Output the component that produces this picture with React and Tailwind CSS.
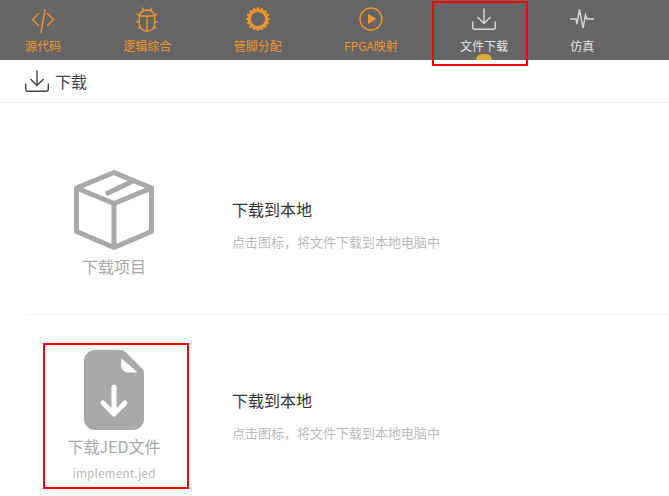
const CJK = { fontFamily: '"Noto Sans CJK SC", "Noto Sans", sans-serif' };

function CodeIcon() {
  return (
    <svg className="mt-[4px]" width="24" height="24" viewBox="0 0 24 24" fill="none" stroke="#f0932b" strokeWidth="1.4">
      <path d="M8 4 1.500 10.500 8 17M16 4l6.500 6.500L16 17M14.200 0.500 9.800 24" />
    </svg>
  );
}
function BugIcon() {
  return (
    <svg width="22" height="25" viewBox="0 0 22 25" fill="none" stroke="#f0932b" strokeWidth="1.4">
      <path d="M3.200 11c0-5.500 3.300-8 7.800-8s7.800 2.500 7.800 8v5.500c0 4.500-3.300 7.800-7.800 7.800s-7.800-3.300-7.800-7.800z" />
      <path d="M3.200 9h15.600M11 9v15M6 0.500l1.500 3M16 0.500l-1.500 3M0.700 6.500 3.500 9M21.300 6.500 18.500 9M0.300 14.700h3M21.700 14.700h-3M1.500 21.500 4.500 19M20.500 21.500 17.500 19" />
    </svg>
  );
}
function GearIcon() {
  const teeth = [0, 45, 90, 135, 180, 225, 270, 315, 22.5, 67.5, 112.5, 157.5, 202.5, 247.5, 292.5, 337.5];
  return (
    <svg width="24" height="24" viewBox="0 0 24 24" fill="none">
      <circle cx="12" cy="12" r="8.700" stroke="#f0932b" strokeWidth="3.200" />
      {teeth.map((a) => (
        <rect key={a} x="10.700" y="0.300" width="2.600" height="3" rx="0.800" fill="#f0932b" transform={`rotate(${a} 12 12)`} />
      ))}
    </svg>
  );
}
function PlayIcon() {
  return (
    <svg width="24" height="24" viewBox="0 0 24 24" fill="none">
      <circle cx="12" cy="12" r="11" stroke="#f0932b" strokeWidth="1.300" />
      <path d="M9.500 7.500v9l7-4.500z" fill="#f0932b" stroke="#f0932b" strokeWidth="1" strokeLinejoin="round" />
    </svg>
  );
}
function DownloadIcon({ color, w = 24, h = 22 }) {
  return (
    <svg width={w} height={h} viewBox="0 0 24 22" fill="none" stroke={color} strokeWidth="1.400">
      <path d="M12 0.500V15M5.500 9l6.500 6.500L18.500 9" />
      <path d="M0.700 13.500v5.500c0 1.300 1 2.300 2.300 2.300h18c1.300 0 2.300-1 2.300-2.300v-5.500" />
    </svg>
  );
}
function WaveIcon() {
  return (
    <svg width="24" height="22" viewBox="0 0 24 22" fill="none" stroke="#d4d4d4" strokeWidth="1.500">
      <path d="M0 11h6l1 5L9.500 1.500 13 20l2.500-13 1.500 4h7" />
    </svg>
  );
}
function BoxIcon() {
  return (
    <svg width="80" height="80" viewBox="0 0 80 80" fill="none" stroke="#a8a9ab" strokeWidth="5" strokeLinejoin="round">
      <path d="M40 2.500 77.500 18v43.500L40 77.500 2.500 61.500V18z" />
      <path d="M2.500 18 40 33.500 77.500 18M40 33.500v44M32 24 60 10.500" />
    </svg>
  );
}
function FileIcon() {
  return (
    <svg width="60" height="80" viewBox="0 0 60 80">
      <path d="M11 0h26.500a5 5 0 0 1 3.500 1.500L58.500 19a5 5 0 0 1 1.500 3.500V69a11 11 0 0 1-11 11H11A11 11 0 0 1 0 69V11A11 11 0 0 1 11 0z" fill="#a8a9ab" />
      <path d="M37.700 9V16a6 6 0 0 0 6 6H52.500Z" fill="#fff" stroke="#fff" strokeWidth="1" strokeLinejoin="round" />
      <path d="M30 37v27M19 53l11 11 11-11" fill="none" stroke="#fff" strokeWidth="5" strokeLinecap="round" strokeLinejoin="round" />
    </svg>
  );
}

function NavItem({ icon, label, active, white }) {
  return (
    <div className="relative flex h-[60px] flex-col items-center">
      <div className="flex h-[38px] items-center">{icon}</div>
      <span className={`whitespace-nowrap text-xs leading-[16px] ${white ? "text-[#e4e4e4]" : "text-[#f0932b]"}`}>{label}</span>
      {active && <span className="absolute bottom-0 left-1/2 h-[6px] w-[16px] -translate-x-1/2 rounded-t-full bg-[#dcaa32]" />}
    </div>
  );
}

function Row({ height, children, title, sub, textTop }) {
  return (
    <div className={`flex ${height}`}>
      {children}
      <div className={`ml-[31px] ${textTop}`}>
        <p className="text-base leading-[24px] text-[#333]">{title}</p>
        <p className="mt-[11px] text-[13px] leading-[20px] text-[#bbb]">{sub}</p>
      </div>
    </div>
  );
}

export default function App() {
  return (
    <div className="relative h-[496px] w-[669px] overflow-hidden bg-white" style={CJK}>
      <nav className="flex h-[60px] gap-[62.3px] bg-[#666] pl-[25px]">
        <NavItem icon={<CodeIcon />} label="源代码" />
        <NavItem icon={<BugIcon />} label="逻辑综合" />
        <NavItem icon={<GearIcon />} label="管脚分配" />
        <NavItem icon={<PlayIcon />} label="FPGA映射" />
        <NavItem icon={<DownloadIcon color="#d9d9d9" />} label="文件下载" active white />
        <NavItem icon={<WaveIcon />} label="仿真" white />
      </nav>

      <header className="flex h-[43px] items-center gap-[6px] border-b border-[#eee] pl-[25px]">
        <DownloadIcon color="#444" />
        <span className="text-base text-[#444]">下载</span>
      </header>

      <main className="pl-[27px]">
        <section className="border-b border-[#f2f2f2]">
          <Row height="h-[211px] pt-[67px]" title="下载到本地" sub="点击图标，将文件下载到本地电脑中" textTop="pt-[27px]">
            <div className="flex w-[174px] flex-col items-center">
              <BoxIcon />
              <span className="mt-[5px] text-base leading-[22px] text-[#a8a9ab]">下载项目</span>
            </div>
          </Row>
        </section>
        <section>
          <Row height="pt-[35px]" title="下载到本地" sub="点击图标，将文件下载到本地电脑中" textTop="pt-[38px]">
            <div className="flex w-[174px] flex-col items-center">
              <FileIcon />
              <span className="mt-[5px] text-base leading-[22px] text-[#a8a9ab]">下载JED文件</span>
              <span className="mt-[6px] text-xs leading-[20px] text-[#bbb]">implement.jed</span>
            </div>
          </Row>
        </section>
      </main>

      <div className="absolute left-[432px] top-[1px] h-[65px] w-[96px] border-2 border-[#f00]" />
      <div className="absolute left-[43px] top-[343px] h-[146px] w-[146px] border-2 border-[#f00]" />
    </div>
  );
}
